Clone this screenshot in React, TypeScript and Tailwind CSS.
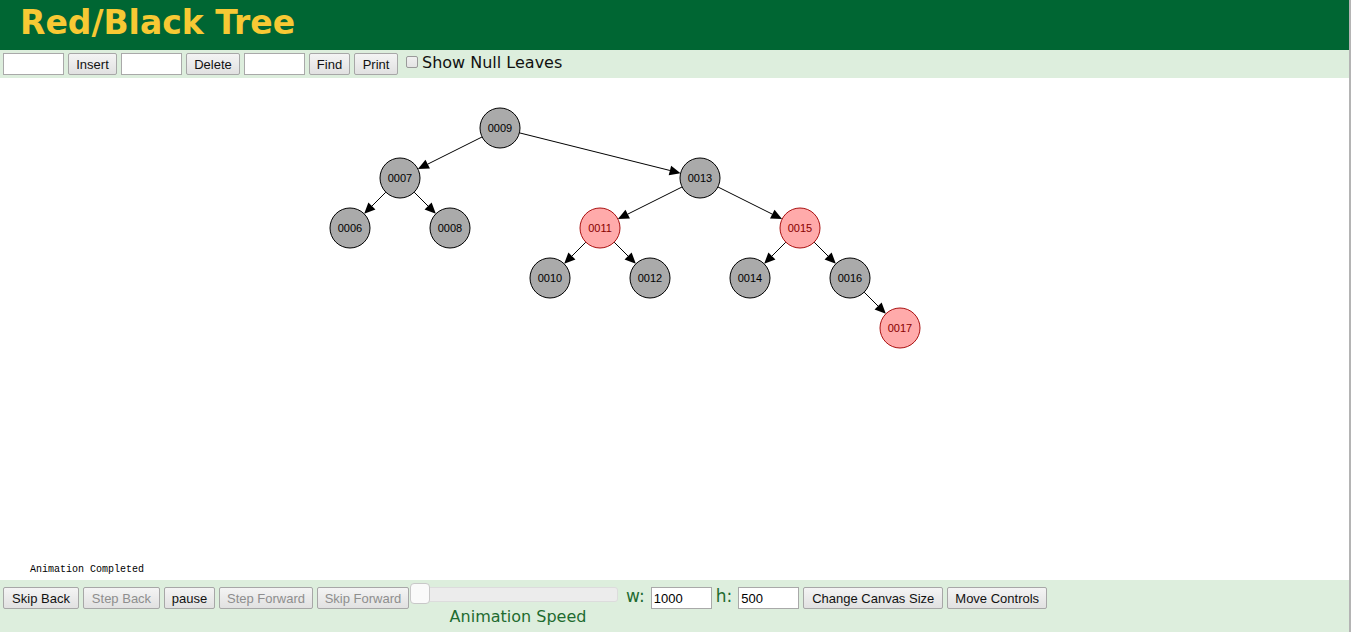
import React from "react";

type N = { k: string; x: number; y: number; red?: boolean };

const nodes: N[] = [
  { k: "0009", x: 500, y: 50 },
  { k: "0007", x: 400, y: 100 },
  { k: "0013", x: 700, y: 100 },
  { k: "0006", x: 350, y: 150 },
  { k: "0008", x: 450, y: 150 },
  { k: "0011", x: 600, y: 150, red: true },
  { k: "0015", x: 800, y: 150, red: true },
  { k: "0010", x: 550, y: 200 },
  { k: "0012", x: 650, y: 200 },
  { k: "0014", x: 750, y: 200 },
  { k: "0016", x: 850, y: 200 },
  { k: "0017", x: 900, y: 250, red: true },
];

const edges: [string, string][] = [
  ["0009", "0007"],
  ["0009", "0013"],
  ["0007", "0006"],
  ["0007", "0008"],
  ["0013", "0011"],
  ["0013", "0015"],
  ["0011", "0010"],
  ["0011", "0012"],
  ["0015", "0014"],
  ["0015", "0016"],
  ["0016", "0017"],
];

const R = 20;

function Edge({ a, b }: { a: N; b: N }) {
  const dx = b.x - a.x;
  const dy = b.y - a.y;
  const len = Math.sqrt(dx * dx + dy * dy);
  const ux = dx / len;
  const uy = dy / len;
  const sx = a.x + ux * R;
  const sy = a.y + uy * R;
  const ex = b.x - ux * R;
  const ey = b.y - uy * R;
  const al = 11;
  const aw = 5;
  const bx = ex - ux * al;
  const by = ey - uy * al;
  const px = -uy;
  const py = ux;
  return (
    <g>
      <line x1={sx} y1={sy} x2={bx} y2={by} stroke="#000" strokeWidth={1} />
      <polygon
        points={`${ex},${ey} ${bx + px * aw},${by + py * aw} ${bx - px * aw},${by - py * aw}`}
        fill="#000"
      />
    </g>
  );
}

function Btn({ children, w, disabled }: { children: React.ReactNode; w: string; disabled?: boolean }) {
  return (
    <button
      className={`${w} h-[22px] shrink-0 rounded-[2px] border border-[#a7a7a7] bg-gradient-to-b from-[#f4f4f4] to-[#e1e1e1] text-[13px] leading-none font-['Liberation_Sans',Arial,sans-serif] ${
        disabled ? "text-[#8e8e8e]" : "text-[#111]"
      }`}
    >
      {children}
    </button>
  );
}

function Inp({ value, w }: { value?: string; w: string }) {
  return (
    <input
      readOnly
      value={value ?? ""}
      className={`${w} h-[22px] shrink-0 border border-[#a9a9a9] bg-white px-[2px] text-[13px] text-black outline-none font-['Liberation_Sans',Arial,sans-serif]`}
    />
  );
}

export default function App() {
  const map: Record<string, N> = {};
  nodes.forEach((n) => (map[n.k] = n));
  return (
    <div className="flex h-[632px] w-[1354px] overflow-hidden bg-white">
      <div className="flex w-[1349px] shrink-0 flex-col">
        <div className="flex h-[50px] items-center bg-[#006633] pl-[20px]">
          <h1 className="text-[33px] font-bold leading-none text-[#f7c934] font-['DejaVu_Sans',Verdana,sans-serif] -mt-[6px]">
            Red/Black Tree
          </h1>
        </div>
        <div className="flex h-[28px] items-center gap-[4px] bg-[#ddeedd] pl-[3px]">
          <Inp w="w-[61px]" />
          <Btn w="w-[49px]">Insert</Btn>
          <Inp w="w-[61px]" />
          <Btn w="w-[54px]">Delete</Btn>
          <Inp w="w-[61px]" />
          <Btn w="w-[41px]">Find</Btn>
          <Btn w="w-[44px]">Print</Btn>
          <div className="ml-[4px] flex items-center">
            <span className="mb-[4px] h-[12px] w-[12px] rounded-[2px] border border-[#9a9a9a] bg-gradient-to-b from-[#f0f0f0] to-[#e4e4e4]" />
            <span className="ml-[4px] text-[16px] leading-none text-[#111] font-['DejaVu_Sans',Verdana,sans-serif] -mt-[3px]">
              Show Null Leaves
            </span>
          </div>
        </div>
        <div className="relative h-[502px] bg-white">
          <svg width={1000} height={502} className="block">
            {edges.map(([a, b]) => (
              <Edge key={a + b} a={map[a]} b={map[b]} />
            ))}
            {nodes.map((n) => (
              <g key={n.k}>
                <circle
                  cx={n.x}
                  cy={n.y}
                  r={R}
                  fill={n.red ? "#ffaaaa" : "#aaaaaa"}
                  stroke={n.red ? "#aa1111" : "#000"}
                  strokeWidth={1}
                />
                <text
                  x={n.x}
                  y={n.y + 4}
                  textAnchor="middle"
                  fontSize={11}
                  fontFamily="'Liberation Sans', Arial, sans-serif"
                  fill={n.red ? "#880000" : "#000"}
                >
                  {n.k}
                </text>
              </g>
            ))}
            <text x={30} y={494} fontSize={10} fontFamily="'Liberation Mono', monospace" fill="#000">
              Animation Completed
            </text>
          </svg>
        </div>
        <div className="flex h-[52px] items-start bg-[#ddeedd] pl-[3px] pt-[7px]">
          <div className="flex gap-[4px]">
            <Btn w="w-[76px]">Skip Back</Btn>
            <Btn w="w-[77px]" disabled>
              Step Back
            </Btn>
            <Btn w="w-[51px]">pause</Btn>
            <Btn w="w-[94px]" disabled>
              Step Forward
            </Btn>
            <Btn w="w-[92px]" disabled>
              Skip Forward
            </Btn>
          </div>
          <div className="ml-[1px] flex w-[208px] flex-col items-center">
            <div className="relative h-[15px] w-[208px]">
              <div className="absolute left-[0px] top-0 h-[15px] w-[208px] rounded-[3px] border border-[#dcdcdc] bg-[#ececec]" />
              <div className="absolute left-0 top-[-4px] h-[21px] w-[20px] rounded-[4px] border border-[#c8c8c8] bg-[#fafafa]" />
            </div>
            <span className="mt-[7px] pl-[8px] text-[16px] leading-none text-[#1e6b30] font-['DejaVu_Sans',Verdana,sans-serif]">
              Animation Speed
            </span>
          </div>
          <div className="ml-[8px] flex items-center gap-[6px]">
            <span className="text-[17px] leading-none text-[#1e6b30] font-['DejaVu_Sans',Verdana,sans-serif] -mt-[3px]">
              w:
            </span>
            <Inp w="w-[61px]" value="1000" />
          </div>
          <div className="ml-[4px] flex items-center gap-[6px]">
            <span className="text-[17px] leading-none text-[#1e6b30] font-['DejaVu_Sans',Verdana,sans-serif] -mt-[3px]">
              h:
            </span>
            <Inp w="w-[61px]" value="500" />
          </div>
          <div className="ml-[4px] flex gap-[4px]">
            <Btn w="w-[140px]">Change Canvas Size</Btn>
            <Btn w="w-[100px]">Move Controls</Btn>
          </div>
        </div>
      </div>
      <div className="h-full w-[2px] shrink-0 bg-[#b4b4b4]" />
      <div className="h-full flex-1 bg-white" />
    </div>
  );
}
